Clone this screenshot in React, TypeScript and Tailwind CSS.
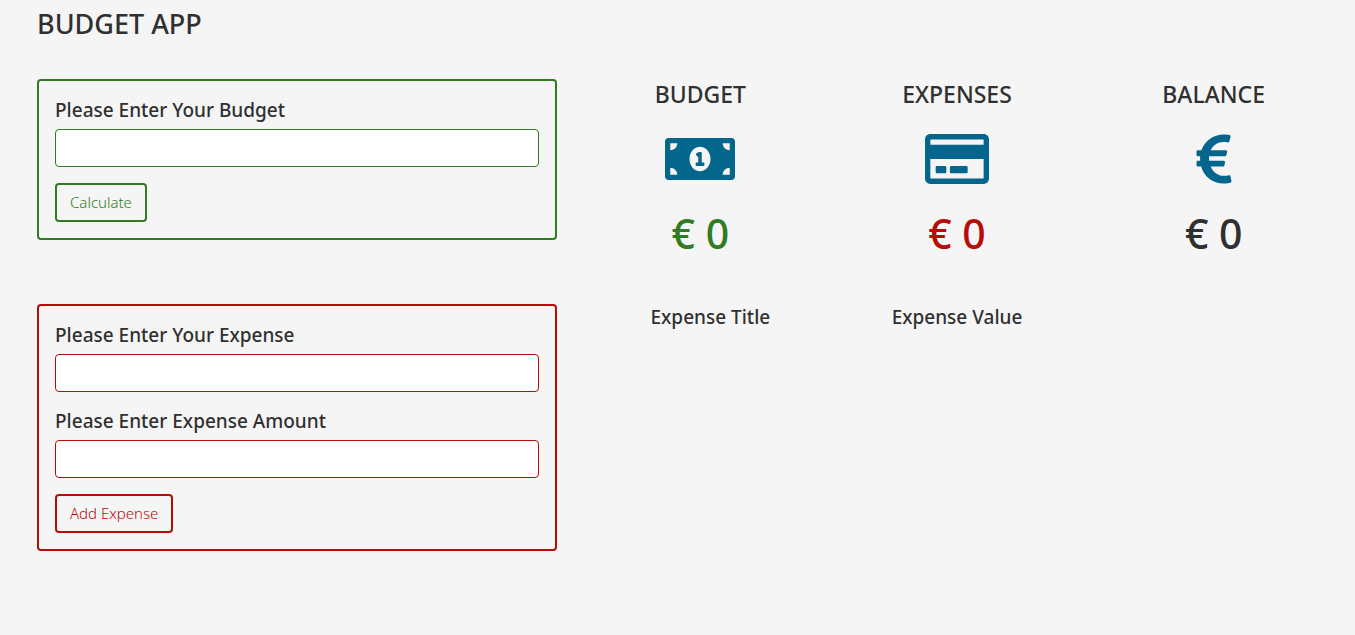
import { useState } from "react";
import type { FormEvent, ReactNode } from "react";
import { FaEuroSign, FaMoneyBillAlt, FaRegCreditCard } from "react-icons/fa";

function Summary({ title, icon, color, value }: { title: string; icon: ReactNode; color: string; value: number }) {
  return (
    <div className="flex flex-1 flex-col items-center">
      <h2 className="text-[23px] leading-[30px] font-medium">{title}</h2>
      <div className="mt-[18px] flex h-16 items-center text-[#05668d]">{icon}</div>
      <p className={"mt-[18px] text-[41px] leading-12 font-medium " + color}>€ {value}</p>
    </div>
  );
}

const label = "mb-[6px] block text-[19px] leading-[26px] font-medium";
const field = "mb-4 block h-[38px] w-full rounded border bg-white px-3 outline-none ";
const button = "block h-[39px] rounded border-2 px-[13px] text-[15px] font-light ";

export default function App() {
  const [budget, setBudget] = useState(0);
  const [expenses, setExpenses] = useState<{ title: string; amount: number }[]>([]);
  const total = expenses.reduce((sum, item) => sum + item.amount, 0);

  function submitBudget(e: FormEvent<HTMLFormElement>) {
    e.preventDefault();
    setBudget(Number(new FormData(e.currentTarget).get("budget")) || 0);
  }
  function submitExpense(e: FormEvent<HTMLFormElement>) {
    e.preventDefault();
    const data = new FormData(e.currentTarget);
    setExpenses([...expenses, { title: String(data.get("title")), amount: Number(data.get("amount")) || 0 }]);
  }

  return (
    <main className="min-h-screen bg-[#f5f5f5] pt-2 pr-[13px] pl-[37px] font-['Noto_Sans',sans-serif] text-[#303030]">
      <h1 className="text-[27px] leading-8 font-medium">BUDGET APP</h1>
      <div className="mt-[39px] grid items-start gap-x-[15px] gap-y-[47px] md:grid-cols-[52fr_77fr]">
        <form onSubmit={submitBudget} className="rounded border-2 border-[#317b22] p-4">
          <label htmlFor="budget" className={label}>Please Enter Your Budget</label>
          <input id="budget" name="budget" className={field + "border-[#317b22]"} />
          <button className={button + "border-[#317b22] text-[#317b22]"}>Calculate</button>
        </form>
        <section className="flex">
          <Summary title="BUDGET" icon={<FaMoneyBillAlt size={70} />} color="text-[#317b22]" value={budget} />
          <Summary title="EXPENSES" icon={<FaRegCreditCard size={64} />} color="text-[#b80c09]" value={total} />
          <Summary title="BALANCE" icon={<FaEuroSign size={56} />} color="text-[#303030]" value={budget - total} />
        </section>
        <form onSubmit={submitExpense} className="rounded border-2 border-[#b80c09] p-4">
          <label htmlFor="title" className={label}>Please Enter Your Expense</label>
          <input id="title" name="title" className={field + "border-[#b80c09]"} />
          <label htmlFor="amount" className={label}>Please Enter Expense Amount</label>
          <input id="amount" name="amount" className={field + "border-[#b80c09]"} />
          <button className={button + "border-[#b80c09] text-[#b80c09]"}>Add Expense</button>
        </form>
        <div className="px-[15px]">
          <table className="w-full table-fixed text-center text-[19px] leading-[26px]">
            <thead>
              <tr>
                <th className="font-medium">Expense Title</th>
                <th className="font-medium">Expense Value</th>
                <td></td>
              </tr>
            </thead>
            <tbody>
              {expenses.map((item, i) => (
                <tr key={i}>
                  <td>{item.title}</td>
                  <td>{item.amount}</td>
                  <td></td>
                </tr>
              ))}
            </tbody>
          </table>
        </div>
      </div>
    </main>
  );
}
